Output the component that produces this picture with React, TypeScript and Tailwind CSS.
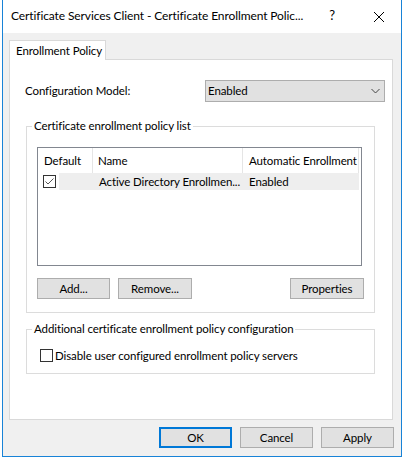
import React from "react";

const font = { fontFamily: 'Lato, "Noto Sans", sans-serif' };

function Btn({ children, w, focused }: { children: React.ReactNode; w: string; focused?: boolean }) {
  return (
    <div
      className={`${w} h-[21px] flex items-center justify-center whitespace-nowrap bg-[#e1e1e1] text-black ${
        focused ? "border-2 border-[#0078d7]" : "border border-[#adadad]"
      }`}
    >
      {children}
    </div>
  );
}

function GroupBox({ label, className, children }: { label: string; className: string; children: React.ReactNode }) {
  return (
    <div className={`relative border border-[#dcdcdc] ${className}`}>
      <span className="absolute left-[5px] top-[-9px] bg-white px-[2px] leading-[16px] text-black whitespace-nowrap">
        {label}
      </span>
      {children}
    </div>
  );
}

export default function App() {
  return (
    <div
      className="w-[404px] h-[459px] bg-white text-[11.5px] tracking-[-0.1px] text-black whitespace-nowrap"
      style={font}
    >
      <div className="ml-[2px] w-[400px] h-[457px] flex flex-col border-x border-b border-[#1883d7]">
        {/* title bar */}
        <div className="h-[33px] shrink-0 bg-white flex items-center pl-[8px]">
          <span className="text-[12px] tracking-[-0.1px] leading-none pb-[1px]">
            Certificate Services Client - Certificate Enrollment Polic...
          </span>
          <span className="ml-auto mr-[38px] text-[13px] leading-none pb-[2px]">?</span>
          <svg width="12" height="12" viewBox="0 0 12 12" className="mr-[16px]">
            <path d="M1 1 L11 11 M11 1 L1 11" stroke="#000" strokeWidth="1" />
          </svg>
        </div>
        {/* body */}
        <div className="flex-1 bg-[#f0f0f0] pl-[6px] pt-[7px] flex flex-col">
          <div className="relative z-10 w-[97px] h-[20px] bg-white border-x border-t border-[#d9d9d9] -mb-px flex items-center pl-[6px]">
            Enrollment Policy
          </div>
          <div className="w-[384px] h-[361px] bg-white border border-[#d9d9d9] flex flex-col">
            <div className="flex items-center mt-[20px] pl-[15px] pr-[7px]">
              <span>Configuration Model:</span>
              <div className="ml-auto w-[180px] h-[22px] bg-[#e1e1e1] border border-[#adadad] flex items-center pl-[2px] pr-[4px]">
                <span>Enabled</span>
                <svg width="9" height="6" viewBox="0 0 9 6" className="ml-auto">
                  <path d="M0.5 1 L4.5 5 L8.5 1" stroke="#444" strokeWidth="1" fill="none" />
                </svg>
              </div>
            </div>
            <GroupBox label="Certificate enrollment policy list" className="ml-[16px] mt-[24px] w-[349px] h-[187px] pl-[10px] pt-[20px]">
              <div className="w-[325px] h-[119px] border border-[#828790] bg-white">
                <div className="flex h-[25px] items-center">
                  <div className="w-[55px] h-full flex items-center pl-[6px] border-r border-[#e5e5e5]">Default</div>
                  <div className="w-[150px] h-full flex items-center pl-[5px] border-r border-[#e5e5e5]">Name</div>
                  <div className="w-[116px] h-full flex items-center pl-[6px] border-r border-[#e5e5e5]">Automatic Enrollment</div>
                </div>
                <div className="flex h-[17px] items-center">
                  <div className="w-[21px] h-full flex items-center pl-[5px]">
                    <div className="w-[13px] h-[13px] border border-[#333] bg-white flex items-center justify-center">
                      <svg width="11" height="11" viewBox="0 0 11 11">
                        <path d="M1.5 5.5 L4 8 L9.5 2.5" stroke="#555" strokeWidth="1" fill="none" />
                      </svg>
                    </div>
                  </div>
                  <div className="w-[300px] h-full bg-[#eeeeee] flex items-center">
                    <span className="w-[184px] pl-[40px]">Active Directory Enrollmen...</span>
                    <span className="pl-[6px]">Enabled</span>
                  </div>
                </div>
              </div>
              <div className="flex mt-[12px]">
                <Btn w="w-[73px]">Add...</Btn>
                <div className="ml-[8px]">
                  <Btn w="w-[74px]">Remove...</Btn>
                </div>
                <div className="ml-auto mr-[10px]">
                  <Btn w="w-[74px]">Properties</Btn>
                </div>
              </div>
            </GroupBox>
            <GroupBox label="Additional certificate enrollment policy configuration" className="ml-[16px] mt-[16px] w-[349px] h-[45px] pl-[13px] pt-[17px]">
              <div className="flex items-center">
                <div className="w-[13px] h-[13px] border border-[#333] bg-white" />
                <span className="ml-[2px]">Disable user configured enrollment policy servers</span>
              </div>
            </GroupBox>
          </div>
          <div className="flex justify-end gap-[8px] mt-[7px] pr-[7px]">
            <Btn w="w-[73px]" focused>OK</Btn>
            <Btn w="w-[73px]">Cancel</Btn>
            <Btn w="w-[73px]">Apply</Btn>
          </div>
        </div>
      </div>
    </div>
  );
}
